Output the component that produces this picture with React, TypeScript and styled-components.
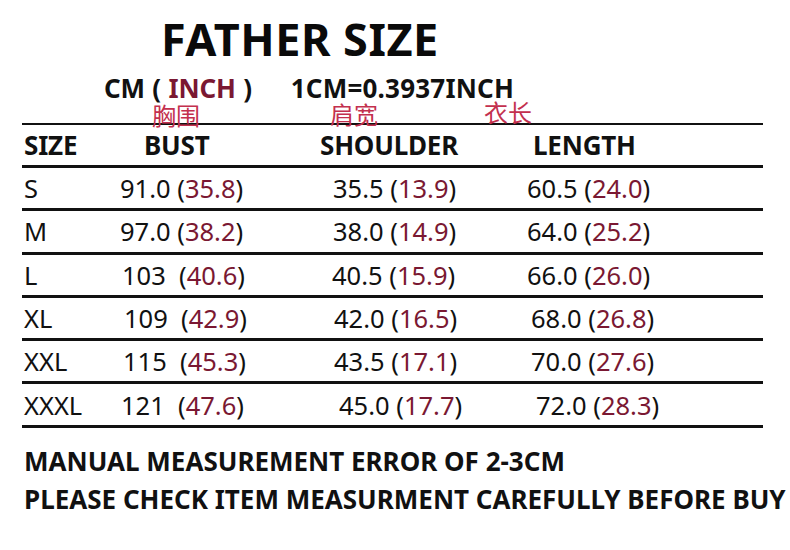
import * as React from 'react'
import styled, { createGlobalStyle } from 'styled-components'

// global
const GlobalStyle = createGlobalStyle`
  html, body {
    margin: 0;
    padding: 0;
    background: #ffffff;
  }
  body {
    font-family: "Noto Sans", "Open Sans", sans-serif;
    color: #111111;
  }
`

const MAROON = '#7a1832'
const CRIMSON = '#c3304e'

// styled
const Page = styled.div`
  width: 790px;
  height: 550px;
  box-sizing: border-box;
  overflow: hidden;
  background: #ffffff;
`

const Title = styled.h1`
  margin: 0;
  padding: 17px 0 0 161px;
  height: 44px;
  font-size: 45px;
  line-height: 44px;
  font-weight: 700;
  letter-spacing: 0.5px;
  color: #0a0a0a;
`

// 単位の行
const Units = styled.div`
  display: flex;
  gap: 39px;
  margin-top: 15px;
  padding-left: 104px;
  height: 24px;
  font-size: 26px;
  line-height: 24px;
  font-weight: 700;
  letter-spacing: 0.2px;
`

const Paren = styled.span`
  letter-spacing: -0.2px;
  word-spacing: 1px;
`

const Inch = styled.span`
  color: ${MAROON};
`

// 中国語ラベル
const Labels = styled.div`
  display: grid;
  grid-template-columns: 178px 154px 1fr;
  margin-top: 3px;
  padding-left: 152px;
  height: 20px;
`

const Label = styled.span<{ $lift?: number }>`
  font-family: "Noto Sans CJK SC", sans-serif;
  font-size: 24px;
  line-height: 24px;
  color: ${CRIMSON};
  position: relative;
  top: ${(p) => -(p.$lift || 0)}px;
`

const Table = styled.div`
  margin: 0 27px 0 22px;
  border-top: 2px solid #111111;
`

const Row = styled.div<{ $head?: boolean }>`
  display: grid;
  grid-template-columns: 96px 200px 202px 1fr;
  align-items: center;
  box-sizing: border-box;
  height: ${(p) => (p.$head ? 43 : 43.3)}px;
  border-bottom: 3px solid #111111;
  font-size: ${(p) => (p.$head ? 26 : 25.5)}px;
  font-weight: ${(p) => (p.$head ? 700 : 400)};
  letter-spacing: ${(p) => (p.$head ? '-0.2px' : '0')};
  white-space: pre;
`

const Cell = styled.div<{ $pad: number }>`
  padding-left: ${(p) => p.$pad}px;
  line-height: 30px;
`

const Inches = styled.span`
  color: ${MAROON};
`

const Notes = styled.div`
  display: flex;
  flex-direction: column;
  gap: 8px;
  margin-top: 18px;
  padding-left: 24px;
  font-size: 26px;
  line-height: 30px;
  font-weight: 700;
  letter-spacing: 0px;
`

type Measure = [string, string]

type SizeRow = {
  size: string
  bust: Measure
  shoulder: Measure
  length: Measure
  nudge: [number, number, number]
}

const rows: SizeRow[] = [
  { size: 'S', bust: ['91.0', '35.8'], shoulder: ['35.5', '13.9'], length: ['60.5', '24.0'], nudge: [0, 0, 0] },
  { size: 'M', bust: ['97.0', '38.2'], shoulder: ['38.0', '14.9'], length: ['64.0', '25.2'], nudge: [0, 0, 0] },
  { size: 'L', bust: ['103 ', '40.6'], shoulder: ['40.5', '15.9'], length: ['66.0', '26.0'], nudge: [2, -1, 0] },
  { size: 'XL', bust: ['109 ', '42.9'], shoulder: ['42.0', '16.5'], length: ['68.0', '26.8'], nudge: [4, 1, 4] },
  { size: 'XXL', bust: ['115 ', '45.3'], shoulder: ['43.5', '17.1'], length: ['70.0', '27.6'], nudge: [3, 1, 4] },
  { size: 'XXXL', bust: ['121 ', '47.6'], shoulder: ['45.0', '17.7'], length: ['72.0', '28.3'], nudge: [1, 6, 9] },
]

const Value: React.FC<{ m: Measure }> = ({ m }) => (
  <>
    {m[0]} (<Inches>{m[1]}</Inches>)
  </>
)

export default function App() {
  return (
    <>
      <GlobalStyle />
      <Page>
        <Title>FATHER SIZE</Title>
        <Units>
          <Paren>
            CM ( <Inch>INCH</Inch> )
          </Paren>
          <span>1CM=0.3937INCH</span>
        </Units>
        <Labels>
          <Label>胸围</Label>
          <Label $lift={1}>肩宽</Label>
          <Label $lift={3}>衣长</Label>
        </Labels>
        <Table>
          <Row $head>
            <Cell $pad={2}>SIZE</Cell>
            <Cell $pad={26}>BUST</Cell>
            <Cell $pad={2}>SHOULDER</Cell>
            <Cell $pad={13}>LENGTH</Cell>
          </Row>
          {rows.map((r) => (
            <Row key={r.size}>
              <Cell $pad={2}>{r.size}</Cell>
              <Cell $pad={2 + r.nudge[0]}>
                <Value m={r.bust} />
              </Cell>
              <Cell $pad={15 + r.nudge[1]}>
                <Value m={r.shoulder} />
              </Cell>
              <Cell $pad={7 + r.nudge[2]}>
                <Value m={r.length} />
              </Cell>
            </Row>
          ))}
        </Table>
        <Notes>
          <span>MANUAL MEASUREMENT ERROR OF 2-3CM</span>
          <span>PLEASE CHECK ITEM MEASURMENT CAREFULLY BEFORE BUY</span>
        </Notes>
      </Page>
    </>
  )
}
